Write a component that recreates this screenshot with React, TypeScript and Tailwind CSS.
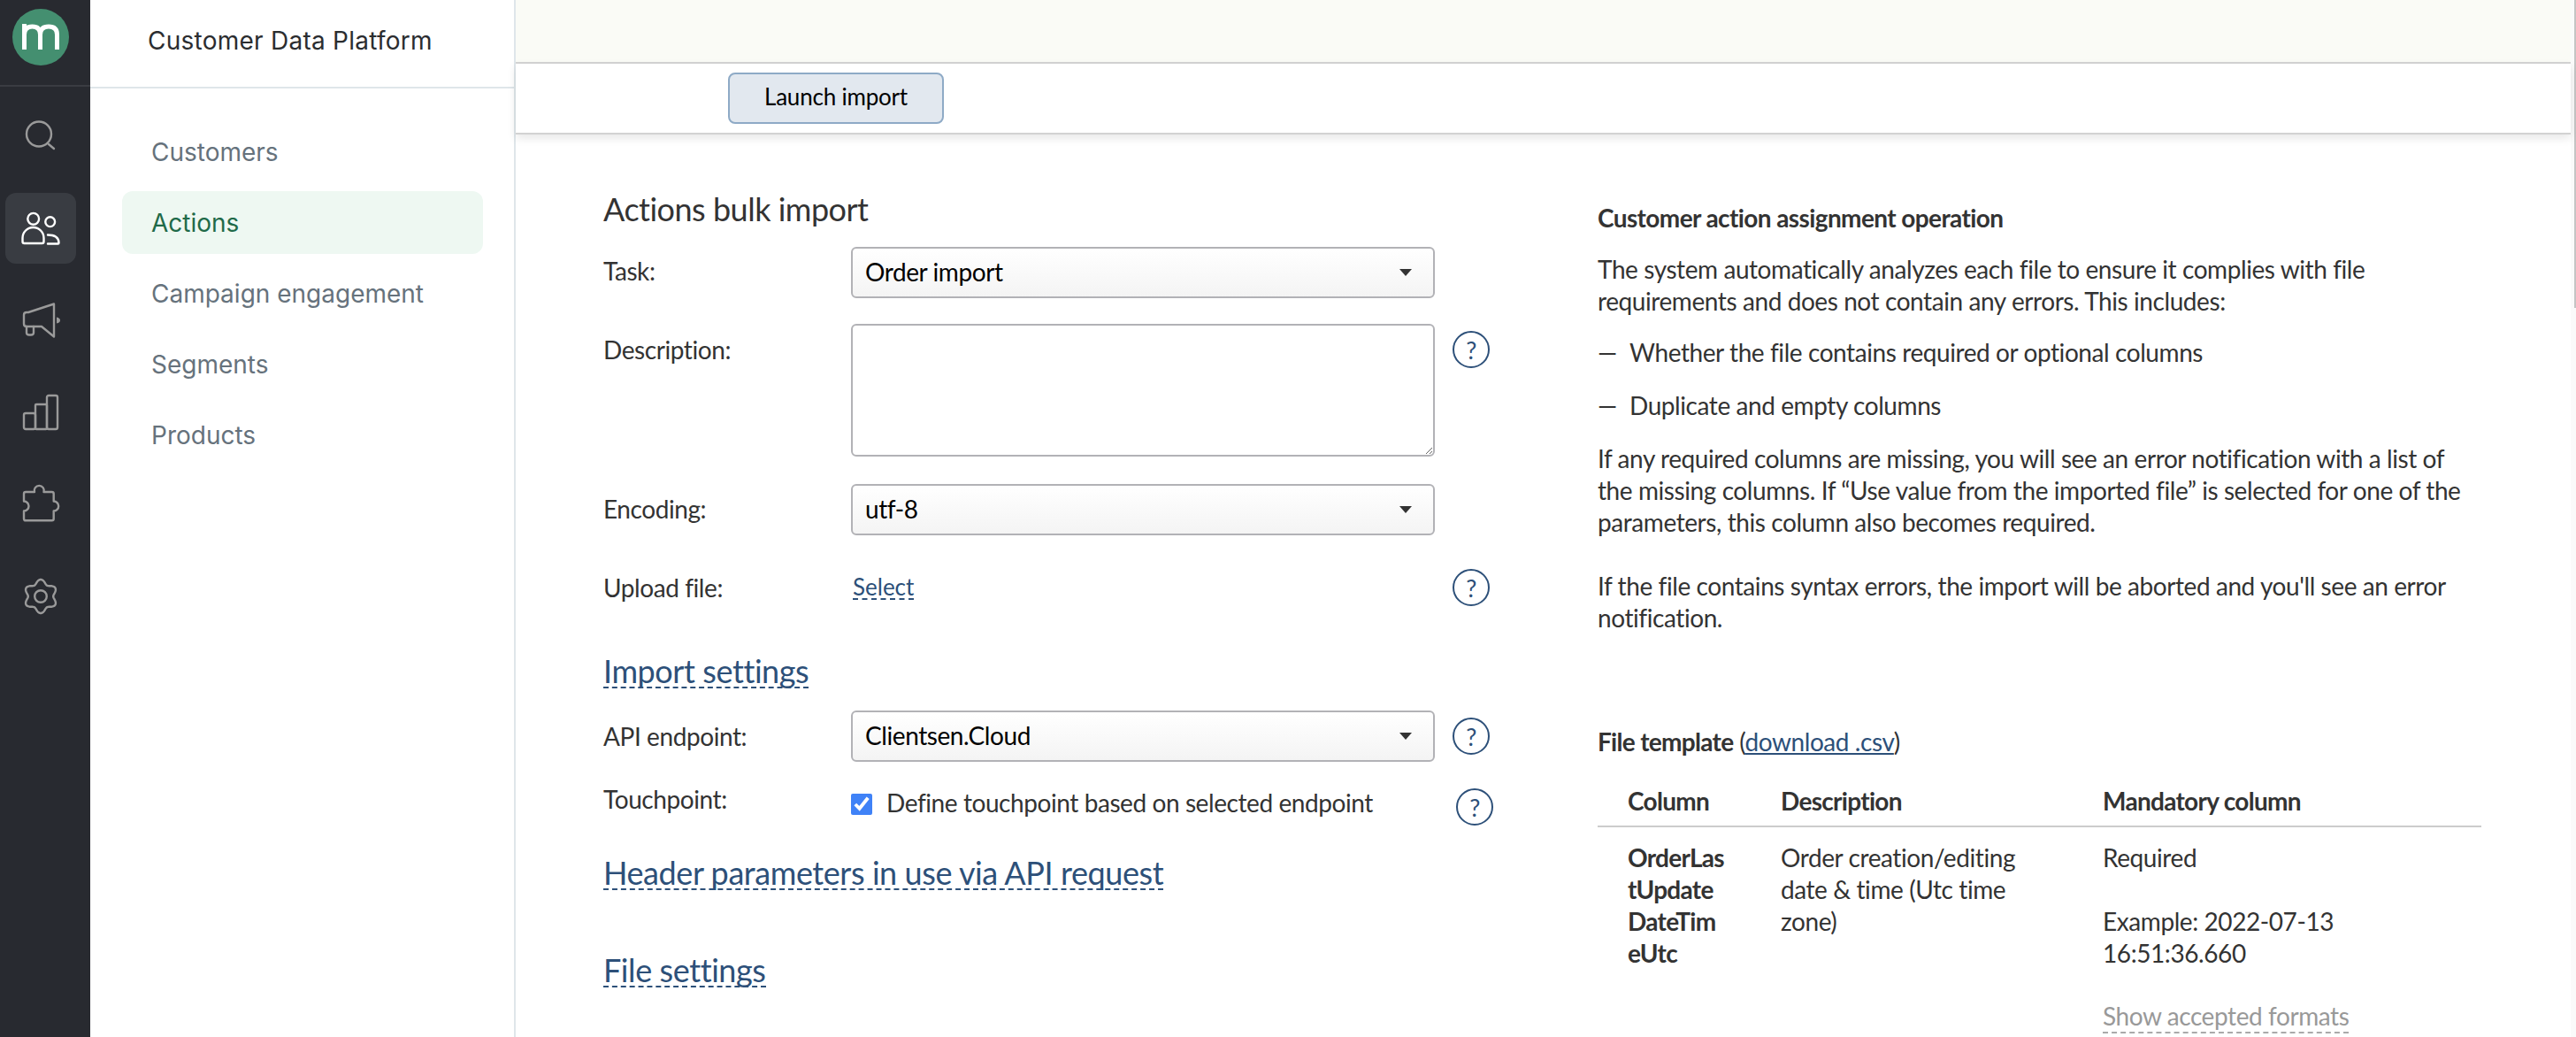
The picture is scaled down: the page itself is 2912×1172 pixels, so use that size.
const gearPath = (() => {
  const pts: string[] = [];
  for (let i = 0; i <= 180; i++) {
    const t = (i / 180) * Math.PI * 2;
    const r = 16.6 + 2.4 * Math.cos(6 * t);
    const x = 24 + r * Math.sin(t);
    const y = 24 - r * Math.cos(t);
    pts.push(`${i === 0 ? "M" : "L"}${x.toFixed(2)} ${y.toFixed(2)}`);
  }
  return pts.join(" ") + " Z";
})();

function Ico({ children, active }: { children: React.ReactNode; active?: boolean }) {
  return (
    <div className={`flex h-[80px] w-[80px] items-center justify-center rounded-[12px] ${active ? "bg-[#393c42] text-white" : "text-[#9a9a9a]"}`}>
      <svg width="48" height="48" viewBox="0 0 48 48" fill="none" stroke="currentColor" strokeWidth="2.4" strokeLinecap="round" strokeLinejoin="round">
        {children}
      </svg>
    </div>
  );
}

function Help({ className = "" }: { className?: string }) {
  return (
    <span className={`flex h-[42px] w-[42px] shrink-0 items-center justify-center rounded-full border-2 border-[#2d5079] text-[27px] leading-none text-[#2d5079] ${className}`}>
      ?
    </span>
  );
}

function Select({ value }: { value: string }) {
  return (
    <div className="flex h-[58px] w-[660px] items-center justify-between rounded-[6px] border-2 border-[#b2b2b6] bg-gradient-to-b from-white to-[#f4f4f4] pl-[14px] pr-[24px] text-[28px] text-black">
      <span className="pb-[3px]">{value}</span>
      <span className="h-0 w-0 border-x-[7px] border-t-[8px] border-x-transparent border-t-[#333]" />
    </div>
  );
}

function Section({ children }: { children: React.ReactNode }) {
  return (
    <span className="inline-block border-b-2 border-dashed border-[#2d5079] text-[36px] leading-[36px] text-[#2d5079]">
      {children}
    </span>
  );
}

const nav = ["Customers", "Actions", "Campaign engagement", "Segments", "Products"];

export default function App() {
  return (
    <div className="flex h-[1172px] w-[2912px] overflow-hidden bg-white font-['Lato',sans-serif] text-[28px] tracking-[-0.42px] text-[#333]">
      <aside className="flex w-[102px] shrink-0 flex-col bg-[#282a30]">
        <div className="flex h-[98px] items-start border-b-2 border-[#3a3c42] pl-[14px] pt-[10px]">
          <svg width="64" height="64" viewBox="0 0 64 64">
            <circle cx="32" cy="32" r="32" fill="#448f70" />
            <path d="M13.5 46V17M13.5 29q0-9 9-9t9 9v17M31.5 29q0-9 9.5-9t9.5 9v17" fill="none" stroke="white" strokeWidth="5" />
          </svg>
        </div>
        <div className="flex flex-col gap-[24px] pl-[6px] pt-[16px]">
          <Ico>
            <circle cx="22" cy="21.5" r="14" />
            <path d="M33 33l6 5" />
          </Ico>
          <Ico active>
            <circle cx="15.7" cy="13.3" r="6.4" />
            <path d="M5.5 41H25.5q2 0 2-2V35a12 12 0 0 0-24 0v4q0 2 2 2z" />
            <circle cx="34.7" cy="16.7" r="5.4" />
            <path d="M32 31.5q12 0 12.5 8.5v.5q0 1-1 1H32" />
          </Ico>
          <Ico>
            <path d="M39 5.5V42.5L25 31H8q-3 0-3-3V18q0-3 3-3h2z" />
            <path d="M8 31v7q0 2.5 3 2.5h2q3 0 3-2.5v-7" />
            <path d="M42 20.5q4 1 4 3.5t-4 3.5z" fill="currentColor" stroke="none" />
          </Ico>
          <Ico>
            <rect x="5" y="25" width="13" height="18" rx="2" />
            <rect x="18" y="15" width="13" height="28" rx="1" />
            <rect x="31" y="5" width="12" height="38" rx="2" />
          </Ico>
          <Ico>
            <path d="M7 10H17a5.5 5.5 0 1 1 10.5 0H36.7q2 0 2 2V20.5a5.5 5.5 0 1 1 0 11V40.3q0 2-2 2H7q-2 0-2-2V31.5a5.5 5.5 0 1 0 0-11V12q0-2 2-2z" />
          </Ico>
          <Ico>
            <path d={gearPath} />
            <circle cx="24" cy="24" r="6.8" />
          </Ico>
        </div>
      </aside>

      <nav className="flex w-[481px] shrink-0 flex-col border-r-2 border-[#dfe6ea] font-['Inter',sans-serif] tracking-normal">
        <div className="flex h-[100px] items-center border-b-2 border-[#dfe6ea] pb-[6px] pl-[65px] text-[28px] tracking-[0.25px] text-[#2b2d30]">
          Customer Data Platform
        </div>
        <div className="flex flex-col pl-[36px] pr-[35px] pt-[36px]">
          {nav.map((n) => (
            <div
              key={n}
              className={`mb-[9px] flex h-[71px] items-center rounded-[12px] pl-[33px] text-[28px] ${n === "Actions" ? "bg-[#eef8f2] text-[#1f6a49]" : "text-[#66727c]"}`}
            >
              {n}
            </div>
          ))}
        </div>
      </nav>

      <main className="flex min-w-0 flex-1 flex-col">
        <div className="h-[72px] shrink-0 border-b-2 border-[#d4d4d4] bg-[#fafbf6]" />
        <div className="relative z-10 h-[80px] shrink-0 border-b-2 border-[#d2d2d2] pl-[240px] pt-[10px] shadow-[0_4px_10px_rgba(0,0,0,0.1)]">
          <button className="h-[58px] w-[244px] rounded-[8px] border-2 border-[#8eaac6] bg-[#e2e8ef] pb-[3px] text-[26px] tracking-[-0.2px] text-black">
            Launch import
          </button>
        </div>

        <div className="flex flex-1 pl-[99px]">
          <section className="flex w-[1124px] shrink-0 flex-col pt-[62px]">
            <h1 className="h-[44px] text-[36px] font-normal leading-[44px] tracking-[-0.5px] text-[#333]">Actions bulk import</h1>
            <div className="mt-[21px] flex items-center">
              <label className="w-[280px] pb-[4px]">Task:</label>
              <Select value="Order import" />
            </div>
            <div className="mt-[29px] flex items-start">
              <label className="w-[280px] pt-[8px]">Description:</label>
              <textarea className="h-[150px] w-[660px] rounded-[6px] border-2 border-[#b2b2b6]" />
              <Help className="ml-[20px] mt-[8px]" />
            </div>
            <div className="mt-[31px] flex items-center">
              <label className="w-[280px] pb-[3px]">Encoding:</label>
              <Select value="utf-8" />
            </div>
            <div className="mt-[38px] flex h-[42px] items-start">
              <label className="w-[280px]">Upload file:</label>
              <div className="flex w-[660px] items-start pl-[2px] pt-[7px]">
                <span className="border-b-2 border-dashed border-[#2d5079] text-[26px] leading-[26px] tracking-normal text-[#2d5079]">Select</span>
              </div>
              <Help className="ml-[20px]" />
            </div>
            <div className="mt-[55px] h-[42px]">
              <Section>Import settings</Section>
            </div>
            <div className="mt-[21px] flex items-center">
              <label className="w-[280px]">API endpoint:</label>
              <Select value="Clientsen.Cloud" />
              <Help className="ml-[20px]" />
            </div>
            <div className="mt-[30px] flex h-[42px] items-center">
              <label className="w-[280px] pb-[18px]">Touchpoint:</label>
              <input type="checkbox" defaultChecked className="mb-[6px] h-[24px] w-[24px] accent-[#3f82f7]" />
              <span className="ml-[16px] w-[644px] pb-[10px]">Define touchpoint based on selected endpoint</span>
              <Help />
            </div>
            <div className="mt-[35px] h-[42px]">
              <Section>Header parameters in use via API request</Section>
            </div>
            <div className="mt-[68px] h-[42px]">
              <Section>File settings</Section>
            </div>
          </section>

          <section className="flex min-w-0 flex-1 flex-col pt-[76px] leading-[36px]">
            <h2 className="font-bold tracking-[-0.6px]">Customer action assignment operation</h2>
            <p className="mt-[22px] w-[900px]">
              The system automatically analyzes each file to ensure it complies with file requirements and does not contain any errors. This includes:
            </p>
            <div className="mt-[22px] flex">
              <span className="w-[36px]">—</span>
              <span>Whether the file contains required or optional columns</span>
            </div>
            <div className="mt-[24px] flex">
              <span className="w-[36px]">—</span>
              <span>Duplicate and empty columns</span>
            </div>
            <p className="mt-[24px] w-[1000px]">
              If any required columns are missing, you will see an error notification with a list of the missing columns. If “Use value from the imported file” is selected for one of the parameters, this column also becomes required.
            </p>
            <p className="mt-[36px] w-[1000px]">
              If the file contains syntax errors, the import will be aborted and you'll see an error notification.
            </p>
            <p className="mt-[104px]">
              <b className="tracking-[-0.7px]">File template</b> (<span className="text-[#2d5079] underline">download .csv</span>)
            </p>
            <div className="mt-[30px] w-[999px]">
              <div className="flex h-[49px] items-start border-b-2 border-[#cccccc] pt-[1px] font-bold tracking-[-0.7px]">
                <span className="ml-[34px] w-[173px]">Column</span>
                <span className="w-[364px]">Description</span>
                <span>Mandatory column</span>
              </div>
              <div className="mt-[16px] flex">
                <b className="ml-[34px] w-[173px] tracking-[-0.7px]">OrderLas<br />tUpdate<br />DateTim<br />eUtc</b>
                <span className="w-[364px]">Order creation/editing<br />date &amp; time (Utc time<br />zone)</span>
                <span className="flex flex-col">
                  <span>Required</span>
                  <span className="mt-[36px]">Example: 2022-07-13<br />16:51:36.660</span>
                  <span className="mt-[35px] self-start border-b-2 border-dashed border-[#aaaaaa] text-[#999999]">Show accepted formats</span>
                </span>
              </div>
            </div>
          </section>
        </div>
      </main>

      <div className="w-[6px] shrink-0 bg-[#fafafa]">
        <div className="ml-[4px] h-[348px] w-[2px] bg-[#c4c4c4]" />
      </div>
    </div>
  );
}
